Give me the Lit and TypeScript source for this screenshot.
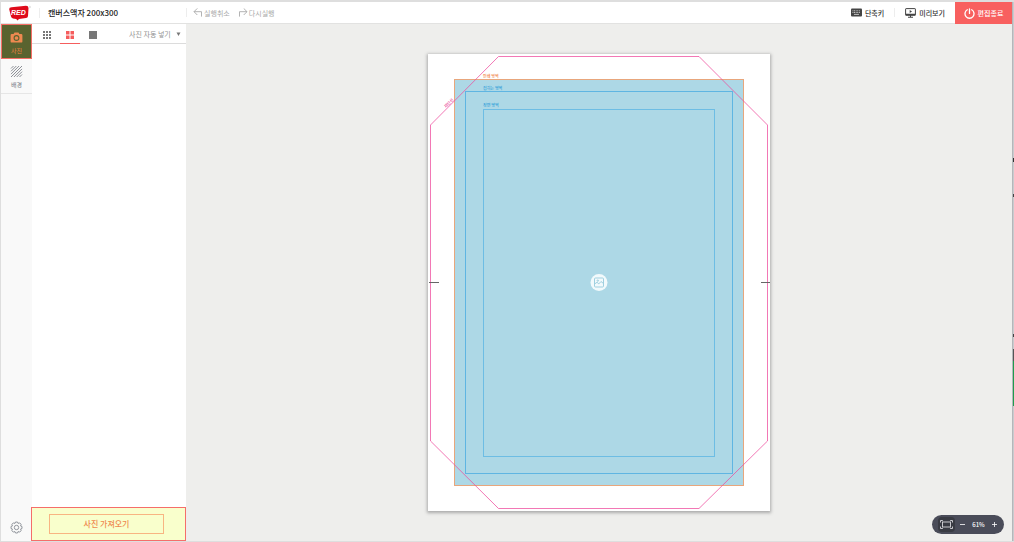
import { LitElement, html, svg, css } from "lit";
import { customElement, state, property } from "lit/decorators.js";
import { classMap } from "lit/directives/class-map.js";

const fontStack = css`"Noto Sans CJK KR", "Noto Sans", sans-serif`;

const controlReset = css`
  * {
    box-sizing: border-box;
  }
  button,
  select {
    margin: 0;
    padding: 0;
    border: 0;
    border-radius: 0;
    background: none;
    color: inherit;
    font: inherit;
    cursor: pointer;
  }
  svg {
    display: block;
    flex: none;
  }
`;

@customElement("editor-header")
class EditorHeader extends LitElement {
  static styles = [
    controlReset,
    css`
      :host {
        display: flex;
        align-items: stretch;
        height: 22px;
        background: #fff;
        border-bottom: 1px solid #e2e2e1;
        font-size: 7px;
        line-height: 10px;
        color: #333;
      }
      .brand {
        display: flex;
        align-items: center;
        width: 185px;
        padding-left: 7px;
      }
      .title {
        margin: 0 0 0 7px;
        padding-left: 8px;
        border-left: 1px solid #ededed;
        font-size: 8px;
        line-height: 10px;
        font-weight: 500;
        color: #222;
      }
      .history {
        display: flex;
        align-items: center;
        align-self: center;
        height: 9px;
        gap: 8px;
        padding-left: 6px;
        border-left: 1px solid #ededed;
        color: #a9a9a9;
      }
      button {
        display: flex;
        align-items: center;
        gap: 1px;
      }
      .tools {
        display: flex;
        margin-left: auto;
        font-weight: 500;
      }
      .tools button {
        gap: 3px;
      }
      .keys {
        padding-right: 10px;
      }
      .preview {
        padding: 0 10px;
      }
      .divider {
        align-self: center;
        width: 1px;
        height: 9px;
        background: #ededed;
      }
      .tools .finish {
        width: 57px;
        justify-content: center;
        height: 22px;
        background: #f8605f;
        color: #fff;
      }
    `,
  ];

  render() {
    return html`
      <div class="brand">
        <svg width="24" height="16" viewBox="0 0 24 16" role="img" aria-label="RED">
          <path d="M3.5 2.2 L18 .8 Q20.4 .8 20.5 3 L20 11 Q19.8 12.8 18 13 L11 14 L9.5 15.6 L8.2 14 L5 13.4 Q3.4 13 3 11.4 L1.2 4.2 Q1 2.4 3.5 2.2Z" fill="#df0b1b" />
          <text x="3" y="10" font-family="Liberation Sans, sans-serif" font-size="7" font-weight="700" font-style="italic" fill="#fff">RED</text>
          <circle cx="21.8" cy="2" r=".8" fill="none" stroke="#bbb" stroke-width=".4" />
        </svg>
        <h1 class="title">캔버스액자 200x300</h1>
      </div>
      <div class="history">
        <button type="button">
          <svg width="10" height="9" viewBox="0 0 10 9" fill="none" stroke="#aaa" stroke-width=".9">
            <path d="M4.3 .4 L1 3.7 L4.3 7 M1 3.7 H8.5 V8.6" />
          </svg>
          실행취소
        </button>
        <button type="button">
          <svg width="10" height="9" viewBox="0 0 10 9" fill="none" stroke="#aaa" stroke-width=".9">
            <path d="M5.7 .4 L9 3.7 L5.7 7 M9 3.7 H1.5 V8.6" />
          </svg>
          다시실행
        </button>
      </div>
      <div class="tools">
        <button class="keys" type="button">
          <svg width="11" height="9" viewBox="0 0 11 9">
            <rect y=".5" width="11" height="8" rx="1" fill="#444" />
            <path d="M1.5 2.8 H9.5 M1.5 4.5 H9.5" stroke="#ddd" stroke-width=".9" stroke-dasharray=".9 .7" />
            <path d="M3 6.4 H8" stroke="#ddd" stroke-width=".8" />
          </svg>
          단축키
        </button>
        <span class="divider"></span>
        <button class="preview" type="button">
          <svg width="11" height="10" viewBox="0 0 11 10">
            <rect x=".6" y=".6" width="9.8" height="6.6" rx=".5" fill="none" stroke="#444" stroke-width="1" />
            <path d="M.5 5.8 H10.5 V7.4 H.5Z M5 7 H6 V9 H5Z M3 8.8 H8 V9.8 H3Z M4.7 2 L7 3.5 L4.7 5Z" fill="#444" />
          </svg>
          미리보기
        </button>
        <button class="finish" type="button">
          <svg width="11" height="11" viewBox="0 0 11 11" fill="none" stroke="#fff" stroke-width="1.3" stroke-linecap="round">
            <path d="M3.3 1.8 A4.5 4.5 0 1 0 7.7 1.8 M5.5 .8 V5.4" />
          </svg>
          편집종료
        </button>
      </div>
    `;
  }
}

@customElement("editor-rail")
class EditorRail extends LitElement {
  static styles = [
    controlReset,
    css`
      :host {
        display: flex;
        flex-direction: column;
        width: 31px;
        background: #f9f9f9;
        font-size: 6px;
        line-height: 9px;
        color: #777c85;
      }
      .item {
        display: flex;
        flex-direction: column;
        align-items: center;
        justify-content: center;
        gap: 2px;
        height: 35px;
        padding-top: 2px;
        border-bottom: 1px solid #e6e6e6;
      }
      .item.active {
        background: #59632f;
        border: 1px solid #f56e66;
        color: #ee8244;
      }
      .settings {
        display: flex;
        justify-content: center;
        margin-top: auto;
        padding-bottom: 7px;
      }
    `,
  ];

  @state() private current = "photo";

  render() {
    const select = (name: string) => () => (this.current = name);
    return html`
      <button type="button" class=${classMap({ item: true, active: this.current === "photo" })} @click=${select("photo")}>
        <svg width="13" height="13" viewBox="0 0 13 13">
          <path d="M1.8 3 H3.6 L4.5 1.4 H8.5 L9.4 3 H11.2 Q12.4 3 12.4 4.2 V10.4 Q12.4 11.6 11.2 11.6 H1.8 Q.6 11.6 .6 10.4 V4.2 Q.6 3 1.8 3Z" fill="#ee8950" />
          <circle cx="6.5" cy="7" r="2.4" fill="none" stroke="#59632f" stroke-width="1.1" />
        </svg>
        사진
      </button>
      <button type="button" class=${classMap({ item: true, active: this.current === "background" })} @click=${select("background")}>
        <svg width="13" height="13" viewBox="0 0 13 13" stroke="#6e727b" stroke-width=".8">
          <path d="M1 3.5 L3.5 1 M1 6.3 L6.3 1 M1 9.1 L9.1 1 M1 12 L12 1 M3.9 12 L12 3.9 M6.7 12 L12 6.7 M9.5 12 L12 9.5" />
        </svg>
        배경
      </button>
      <button class="settings" type="button" aria-label="설정">
        <svg width="13" height="13" viewBox="0 0 13 13" fill="none" stroke="#888c94" stroke-width=".9" stroke-linejoin="round">
          <path d="M5.5 1 H7.5 L8 2.4 L9.7 1.9 L11.1 3.3 L10.6 5 L12 5.5 V7.5 L10.6 8 L11.1 9.7 L9.7 11.1 L8 10.6 L7.5 12 H5.5 L5 10.6 L3.3 11.1 L1.9 9.7 L2.4 8 L1 7.5 V5.5 L2.4 5 L1.9 3.3 L3.3 1.9 L5 2.4Z" />
          <circle cx="6.5" cy="6.5" r="2.2" />
        </svg>
      </button>
    `;
  }
}

@customElement("photo-panel")
class PhotoPanel extends LitElement {
  static styles = [
    controlReset,
    css`
      :host {
        display: flex;
        flex-direction: column;
        width: 154px;
        background: #fff;
      }
      .toolbar {
        display: flex;
        height: 20px;
        padding-left: 5px;
        border-bottom: 1px solid #dcdcdc;
      }
      .view {
        display: flex;
        align-items: center;
        justify-content: center;
        width: 20px;
        height: 20px;
        margin-right: 3px;
        padding-top: 2px;
        border-bottom: 1px solid transparent;
        color: #777;
      }
      .view.active {
        color: #f55d5d;
        border-color: #f55d5d;
      }
      .auto {
        display: flex;
        align-items: center;
        gap: 1px;
        margin-left: auto;
        padding-right: 5px;
        color: #909090;
        font-size: 7px;
        line-height: 10px;
      }
      .auto select {
        appearance: none;
        width: 46px;
        height: 12px;
      }
      .list {
        flex: 1;
      }
      .upload {
        display: flex;
        justify-content: center;
        height: 34px;
        margin-left: -1px;
        padding: 6px 21px 6px 17px;
        background: #f9ffcc;
        border: 1px solid #f56e6a;
      }
      .upload button {
        flex: 1;
        height: 20px;
        border: 1px solid #f8b582;
        color: #ef8a50;
        font-size: 8px;
        line-height: 12px;
        font-weight: 500;
      }
    `,
  ];

  @state() private columns = 2;

  private squares(count: number) {
    const gap = 1;
    const size = (8 - gap * (count - 1)) / count;
    const cells = Array.from({ length: count * count }, (_, i) => ({
      x: (i % count) * (size + gap),
      y: Math.floor(i / count) * (size + gap),
    }));
    return html`<svg width="8" height="8" viewBox="0 0 8 8" fill="currentColor">
      ${cells.map((c) => svg`<rect x=${c.x} y=${c.y} width=${size} height=${size} />`)}
    </svg>`;
  }

  render() {
    return html`
      <div class="toolbar">
        ${[3, 2, 1].map(
          (n) => html`<button
            type="button"
            aria-label="${n}열 보기"
            class=${classMap({ view: true, active: this.columns === n })}
            @click=${() => (this.columns = n)}
          >
            ${this.squares(n)}
          </button>`
        )}
        <label class="auto">
          <select aria-label="사진 자동 넣기">
            <option>사진 자동 넣기</option>
          </select>
          <svg width="5" height="4" viewBox="0 0 5 4"><path d="M.5 .5 H4.5 L2.5 4Z" fill="#777" /></svg>
        </label>
      </div>
      <div class="list"></div>
      <div class="upload"><button type="button">사진 가져오기</button></div>
    `;
  }
}

@customElement("zoom-control")
class ZoomControl extends LitElement {
  static styles = [
    controlReset,
    css`
      :host {
        display: flex;
        align-items: center;
        width: 72px;
        height: 19px;
        padding: 0 3px 0 6px;
        border-radius: 10px;
        background: #4a4c59;
        color: #fff;
        font-size: 6px;
        line-height: 9px;
        font-weight: 500;
      }
      .fit {
        display: flex;
        align-items: center;
        justify-content: center;
        width: 17px;
        height: 15px;
        margin-right: 1px;
        border-radius: 4px;
        background: #393b43;
      }
      .step {
        display: flex;
        align-items: center;
        justify-content: center;
        width: 13px;
        height: 15px;
      }
      .value {
        flex: 1;
        text-align: center;
      }
    `,
  ];

  @property({ type: Number }) value = 61;

  render() {
    return html`
      <button class="fit" type="button" aria-label="화면 맞춤">
        <svg width="13" height="9" viewBox="0 0 13 9" fill="none" stroke="#d8d8dc" stroke-width=".9">
          <rect x="2.5" y="2" width="8" height="5" />
          <path d="M.5 2.5 V.5 H2.8 M10.2 .5 H12.5 V2.5 M12.5 6.5 V8.5 H10.2 M2.8 8.5 H.5 V6.5" />
        </svg>
      </button>
      <button class="step" type="button" aria-label="축소" @click=${() => (this.value -= 1)}>
        <svg width="5" height="5" viewBox="0 0 5 5" stroke="#fff" stroke-width=".8"><path d="M0 2.5 H5" /></svg>
      </button>
      <span class="value">${this.value}%</span>
      <button class="step" type="button" aria-label="확대" @click=${() => (this.value += 1)}>
        <svg width="5" height="5" viewBox="0 0 5 5" stroke="#fff" stroke-width=".8"><path d="M0 2.5 H5 M2.5 0 V5" /></svg>
      </button>
    `;
  }
}

@customElement("canvas-sheet")
class CanvasSheet extends LitElement {
  static styles = css`
    :host {
      display: block;
      background: #fff;
      box-shadow: 0 1px 3px 1px #aaa;
    }
    svg {
      display: block;
    }
    text {
      font-size: 4px;
      font-weight: 500;
    }
  `;

  render() {
    return html`
      <svg width="342" height="457" viewBox="0 0 342 457" fill="none">
        <rect x="26.5" y="25.5" width="289" height="406" fill="#add8e6" stroke="#e8a67c" />
        <rect x="37.5" y="37.5" width="267" height="382" stroke="#5fb5e2" />
        <rect x="55.5" y="55.5" width="231" height="347" stroke="#6dbde4" />
        <path d="M70.5 2.5 H271 L339.5 71 V387 L271 454.5 H70.5 L2.5 387 V71Z" stroke="#ee4b9c" stroke-opacity=".75" />
        <path d="M1 228.5 H11 M333 228.5 H342" stroke="#666" />
        <text x="55" y="24" fill="#f07838">인쇄 영역</text>
        <text x="55" y="36" fill="#289bd8">접히는 영역</text>
        <text x="55" y="53" fill="#289bd8">정면 영역</text>
        <text transform="translate(18 54) rotate(-45)" fill="#e84393">재단선</text>
        <circle cx="171" cy="228.5" r="8.5" fill="#f2fafc" />
        <g stroke="#9fd0e0" stroke-width="1">
          <rect x="166.5" y="224" width="9" height="9" rx="1" />
          <path d="M166.5 230 L169 228.3 L170.8 229.9 L173 227.5 L175.5 229.5" />
          <circle cx="169.8" cy="226.6" r=".7" />
        </g>
      </svg>
    `;
  }
}

@customElement("app-root")
class AppRoot extends LitElement {
  static styles = [
    controlReset,
    css`
      :host {
        display: flex;
        height: 100vh;
        box-sizing: border-box;
        padding: 2px 0 1px 1px;
        background: #dedede;
        font-family: ${fontStack};
      }
      .window {
        display: flex;
        flex-direction: column;
        flex: 1;
        min-width: 0;
      }
      .body {
        display: flex;
        flex: 1;
        min-height: 0;
      }
      .stage {
        position: relative;
        flex: 1;
        display: flex;
        align-items: center;
        justify-content: center;
        background: #eeeeec;
      }
      .zoom {
        position: absolute;
        right: 8px;
        bottom: 7px;
      }
      .edge {
        width: 2px;
        border-left: 1px solid #b5b6ba;
        background: linear-gradient(
          #c9cbce 29%,
          #333 29% 29.6%,
          #c9cbce 29.6% 35.6%,
          #444 35.6% 36.2%,
          #c9cbce 36.2% 61.6%,
          #444 61.6% 62.2%,
          #c9cbce 62.2% 64.4%,
          #555 64.4% 66.6%,
          #1f9d4d 66.6% 75%,
          #c9cbce 75%
        );
      }
    `,
  ];

  render() {
    return html`
      <div class="window">
        <editor-header></editor-header>
        <div class="body">
          <editor-rail></editor-rail>
          <photo-panel></photo-panel>
          <main class="stage">
            <canvas-sheet></canvas-sheet>
            <zoom-control class="zoom"></zoom-control>
          </main>
        </div>
      </div>
      <div class="edge"></div>
    `;
  }
}
